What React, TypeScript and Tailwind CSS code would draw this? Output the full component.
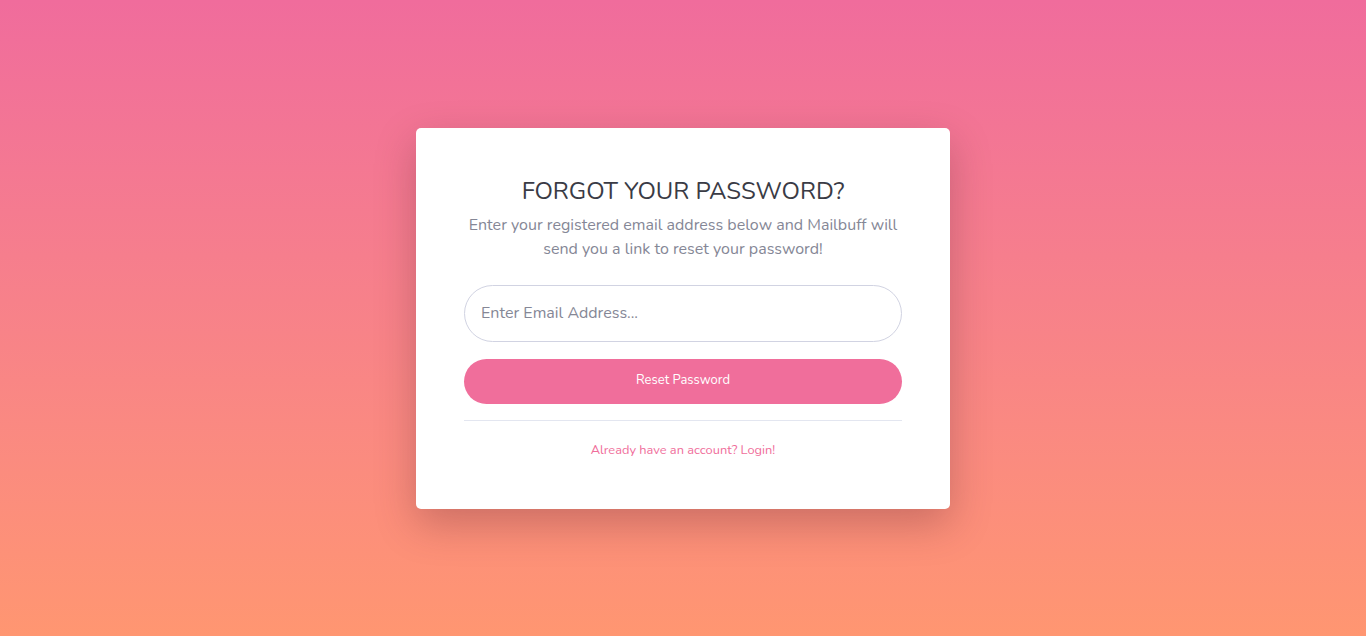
import React from 'react';

export default function App() {
  return (
    <div
      className="min-h-[636px] w-full flex items-center justify-center bg-gradient-to-b from-[#f06c9c] to-[#ff9671]"
      style={{ fontFamily: 'Nunito, Lato, "Open Sans", sans-serif' }}
    >
      {/* Card */}
      <div className="w-[534px] bg-white rounded-[5px] px-12 pt-12 pb-[49px] shadow-[0_15px_40px_rgba(80,30,40,0.28)]">
        <div className="text-center">
          <h1 className="text-[24px] leading-[31px] text-[#3a3b45] mb-[6px]">FORGOT YOUR PASSWORD?</h1>
          <p className="text-[16px] leading-6 text-[#858796] mb-6">
            Enter your registered email address below and Mailbuff will send you a link to reset your password!
          </p>
        </div>
        <form onSubmit={(e) => e.preventDefault()}>
          <input
            type="email"
            placeholder="Enter Email Address..."
            className="w-full h-[57px] rounded-full border border-[#d1d3e2] px-4 text-[16px] text-[#6e707e] placeholder:text-[#858796] outline-none"
          />
          <button
            type="submit"
            className="mt-[17px] w-full h-[45px] rounded-full bg-[#f06e9b] text-white text-[13px]"
          >
            Reset Password
          </button>
        </form>
        <hr className="mt-4 border-t border-[#e3e6f0]" />
        <div className="text-center mt-[19px] text-[12.8px] leading-[20px]">
          <a href="#" className="text-[#f06e9b]">
            Already have an account? Login!
          </a>
        </div>
      </div>
    </div>
  );
}
